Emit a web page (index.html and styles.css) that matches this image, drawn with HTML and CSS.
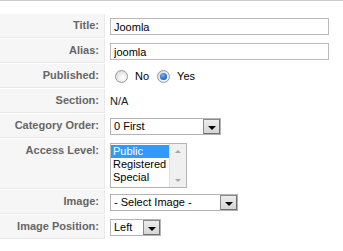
FILE: index.html
```html
<!DOCTYPE html>
<html lang="en">
  <head>
    <meta charset="UTF-8" />
    <title>Edit Article</title>
    <link rel="stylesheet" href="styles.css">
  </head>
  <body>
    <div class="admin-form">
      <!-- Title -->
      <div class="row">
        <div class="key">Title:</div>
        <div class="value">
          <input class="text-field" type="text" value="Joomla" />
        </div>
      </div>

      <!-- Alias -->
      <div class="row">
        <div class="key">Alias:</div>
        <div class="value">
          <input class="text-field" type="text" value="joomla" />
        </div>
      </div>

      <!-- Published -->
      <div class="row">
        <div class="key">Published:</div>
        <div class="value radios">
          <span class="radio"></span><span class="radio-label">No</span>
          <span class="radio checked"></span><span class="radio-label">Yes</span>
        </div>
      </div>

      <!-- Section -->
      <div class="row">
        <div class="key">Section:</div>
        <div class="value plain">N/A</div>
      </div>

      <!-- Category Order -->
      <div class="row">
        <div class="key">Category Order:</div>
        <div class="value">
          <div class="dropdown order-select">
            <span class="dropdown-text">0 First</span>
            <span class="dropdown-button"><span class="arrow"></span></span>
          </div>
        </div>
      </div>

      <!-- Access Level -->
      <div class="row tall">
        <div class="key">Access Level:</div>
        <div class="value">
          <div class="listbox">
            <ul class="listbox-items">
              <li class="selected">Public</li>
              <li>Registered</li>
              <li>Special</li>
            </ul>
            <div class="scrollbar">
              <span class="scroll-up"></span>
              <span class="scroll-down"></span>
            </div>
          </div>
        </div>
      </div>

      <!-- Image -->
      <div class="row">
        <div class="key">Image:</div>
        <div class="value">
          <div class="dropdown image-select">
            <span class="dropdown-text">- Select Image -</span>
            <span class="dropdown-button"><span class="arrow"></span></span>
          </div>
        </div>
      </div>

      <!-- Image Position -->
      <div class="row">
        <div class="key">Image Position:</div>
        <div class="value">
          <div class="dropdown position-select">
            <span class="dropdown-text">Left</span>
            <span class="dropdown-button"><span class="arrow"></span></span>
          </div>
        </div>
      </div>
    </div>
  </body>
</html>
```

FILE: styles.css
```css
* {
  margin: 0;
  padding: 0;
  box-sizing: border-box;
}

body {
  font-family: "Liberation Sans", Arial, Helvetica, sans-serif;
  font-size: 11px;
  color: #000;
  background: #fff;
}

.admin-form {
  border-top: 1px solid #cccccc;
  padding-top: 13px;
  display: flex;
  flex-direction: column;
  gap: 1px;
}

/* Rows */
.row {
  display: flex;
  height: 24px;
}

.row.tall {
  height: 50px;
}

.key {
  width: 105px;
  flex-shrink: 0;
  background: #f6f6f6;
  border-right: 1px solid #e9e9e9;
  border-bottom: 1px solid #e9e9e9;
  color: #666;
  font-weight: bold;
  text-align: right;
  padding-right: 5px;
  line-height: 23px;
}

.value {
  flex: 1;
  display: flex;
  align-items: flex-start;
  padding: 4px 0 0 5px;
}

.value.plain {
  padding-top: 0;
  line-height: 24px;
  color: #222;
}

/* Text inputs */
.text-field {
  width: 219px;
  height: 17px;
  border: 1px solid #bababa;
  padding: 0 3px;
  font-family: inherit;
  font-size: 11px;
  color: #000;
  outline: none;
}

/* Radios */
.radios {
  align-items: center;
  padding-top: 0;
}

.radio {
  width: 13px;
  height: 13px;
  border-radius: 50%;
  border: 1px solid #9a9a9a;
  background: radial-gradient(circle at 60% 60%, #ffffff 0%, #e8e8e8 55%, #c8c8c8 100%);
  margin: 0 7px 0 5px;
  position: relative;
}

.radio.checked::after {
  content: "";
  position: absolute;
  left: 2px;
  top: 2px;
  width: 7px;
  height: 7px;
  border-radius: 50%;
  background: radial-gradient(circle at 40% 35%, #7fb4f0 0%, #2a6fcf 55%, #1b4f9a 100%);
}

.radio-label {
  margin-right: 3px;
}

.radio-label:last-child {
  margin-right: 0;
}

/* Dropdowns */
.dropdown {
  height: 17px;
  border: 1px solid #b4b4b4;
  background: #fff;
  display: flex;
  align-items: center;
  padding-left: 3px;
}

.dropdown-text {
  flex: 1;
  line-height: 15px;
}

.dropdown-button {
  width: 17px;
  height: 15px;
  border: 1px solid #6e6e6e;
  border-top-color: #8a8a8a;
  border-left-color: #8a8a8a;
  background: linear-gradient(#ececec, #d6d6d6);
  display: flex;
  align-items: flex-end;
  justify-content: center;
  padding-bottom: 3px;
}

.arrow {
  width: 0;
  height: 0;
  border-left: 4px solid transparent;
  border-right: 4px solid transparent;
  border-top: 4px solid #000;
}

.order-select {
  width: 111px;
}

.image-select {
  width: 128px;
}

.position-select {
  width: 51px;
}

/* Access level listbox */
.listbox {
  width: 77px;
  height: 45px;
  border: 1px solid #b4b4b4;
  display: flex;
}

.listbox-items {
  list-style: none;
  flex: 1;
  padding-top: 1px;
}

.listbox-items li {
  height: 13px;
  line-height: 13px;
  padding-left: 2px;
}

.listbox-items li.selected {
  background: #3399ff;
  color: #fff;
}

.scrollbar {
  width: 17px;
  background: #f0f0f0;
  border-left: 1px solid #e2e2e2;
  display: flex;
  flex-direction: column;
  justify-content: space-between;
  align-items: center;
  padding: 6px 0 5px;
}

.scroll-up,
.scroll-down {
  width: 0;
  height: 0;
  border-left: 3px solid transparent;
  border-right: 3px solid transparent;
}

.scroll-up {
  border-bottom: 3px solid #a6a6a6;
}

.scroll-down {
  border-top: 3px solid #a6a6a6;
}
```
